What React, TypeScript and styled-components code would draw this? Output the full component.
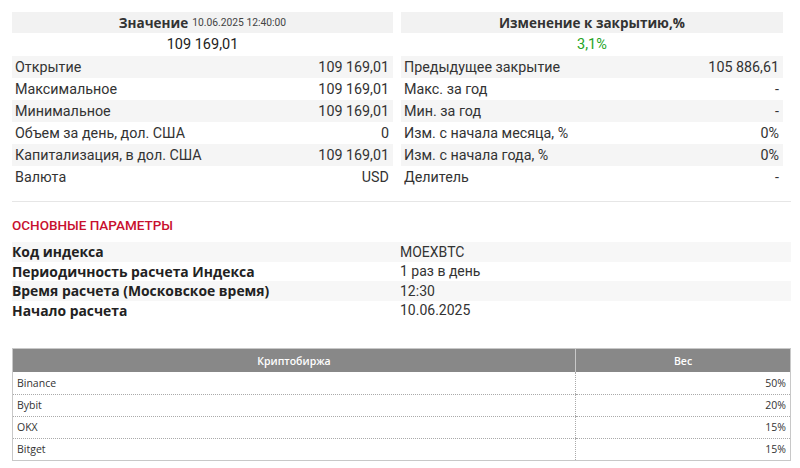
import styled, { createGlobalStyle } from "styled-components";

const GlobalStyle = createGlobalStyle`
  html, body {
    margin: 0;
    padding: 0;
    background: #fff;
  }
  body {
    font-family: Roboto, "Noto Sans", sans-serif;
    color: #333;
  }
`;

const leftRows = [
  ["Открытие", "109 169,01"],
  ["Максимальное", "109 169,01"],
  ["Минимальное", "109 169,01"],
  ["Объем за день, дол. США", "0"],
  ["Капитализация, в дол. США", "109 169,01"],
  ["Валюта", "USD"],
];

const rightRows = [
  ["Предыдущее закрытие", "105 886,61"],
  ["Макс. за год", "-"],
  ["Мин. за год", "-"],
  ["Изм. с начала месяца, %", "0%"],
  ["Изм. с начала года, %", "0%"],
  ["Делитель", "-"],
];

const params = [
  ["Код индекса", "MOEXBTC"],
  ["Периодичность расчета Индекса", "1 раз в день"],
  ["Время расчета (Московское время)", "12:30"],
  ["Начало расчета", "10.06.2025"],
];

const exchanges = [
  ["Binance", "50%"],
  ["Bybit", "20%"],
  ["OKX", "15%"],
  ["Bitget", "15%"],
];

const App = () => {
  return (
    <Page>
      <GlobalStyle />
      <Panels>
        <Panel>
          <PanelHead>
            Значение <small>10.06.2025 12:40:00</small>
          </PanelHead>
          <BigValue>109 169,01</BigValue>
          {leftRows.map(([k, v], i) => (
            <Row key={k} $striped={i % 2 === 0}>
              <span>{k}</span>
              <span>{v}</span>
            </Row>
          ))}
        </Panel>
        <Panel>
          <PanelHead>Изменение к закрытию,%</PanelHead>
          <BigValue $green>3,1%</BigValue>
          {rightRows.map(([k, v], i) => (
            <Row key={k} $striped={i % 2 === 0}>
              <span>{k}</span>
              <span>{v}</span>
            </Row>
          ))}
        </Panel>
      </Panels>

      <Divider />

      <SectionTitle>Основные параметры</SectionTitle>
      <Params>
        {params.map(([k, v], i) => (
          <ParamRow key={k} $striped={i % 2 === 0}>
            <ParamLabel>{k}</ParamLabel>
            <ParamValue>{v}</ParamValue>
          </ParamRow>
        ))}
      </Params>

      <Table>
        <thead>
          <tr>
            <Th>Криптобиржа</Th>
            <Th $narrow>Вес</Th>
          </tr>
        </thead>
        <tbody>
          {exchanges.map(([name, w]) => (
            <tr key={name}>
              <Td>{name}</Td>
              <Td $right>{w}</Td>
            </tr>
          ))}
        </tbody>
      </Table>
    </Page>
  );
};

const Page = styled.div`
  width: 800px;
  height: 468px;
  box-sizing: border-box;
  padding: 12px 9px 0 12px;
  overflow: hidden;
`;

const Panels = styled.div`
  display: grid;
  grid-template-columns: 381px 382px;
  column-gap: 8px;
`;

const Panel = styled.div`
  display: flex;
  flex-direction: column;
`;

const PanelHead = styled.div`
  height: 21px;
  background: #f2f2f2;
  display: flex;
  align-items: center;
  justify-content: center;
  gap: 4px;
  font-family: "Open Sans", "Noto Sans", sans-serif;
  font-size: 13.5px;
  font-weight: 700;
  color: #333;

  small {
    font-family: Roboto, "Noto Sans", sans-serif;
    font-size: 10.3px;
    font-weight: 400;
    color: #444;
  }
`;

const BigValue = styled.div<{ $green?: boolean }>`
  height: 23px;
  display: flex;
  align-items: center;
  justify-content: center;
  font-size: 14.5px;
  color: ${(p) => (p.$green ? "#24a324" : "#222")};
`;

const Row = styled.div<{ $striped?: boolean }>`
  height: 22px;
  display: flex;
  align-items: center;
  justify-content: space-between;
  padding: 0 4px 0 3px;
  font-size: 14.3px;
  color: #333;
  background: ${(p) => (p.$striped ? "#f5f5f5" : "#fff")};
`;

const Divider = styled.div`
  height: 1px;
  background: #e6e6e6;
  margin: 13px 0 0;
`;

const SectionTitle = styled.div`
  margin-top: 16px;
  font-size: 13.5px;
  font-weight: 500;
  text-transform: uppercase;
  color: #c8102e;
  line-height: 15px;
`;

const Params = styled.div`
  margin-top: 9px;
  display: flex;
  flex-direction: column;
`;

const ParamRow = styled.div<{ $striped?: boolean }>`
  height: 19.5px;
  display: grid;
  grid-template-columns: 388px 1fr;
  align-items: center;
  font-size: 14px;
  background: ${(p) => (p.$striped ? "#f7f7f7" : "#fff")};
`;

const ParamLabel = styled.span`
  font-family: "Open Sans", "Noto Sans", sans-serif;
  font-size: 13.9px;
  font-weight: 700;
  color: #222;
`;

const ParamValue = styled.span`
  color: #333;
`;

const Table = styled.table`
  margin-top: 28px;
  width: 779px;
  border-collapse: collapse;
  border: 1px solid #c8c8c8;
  font-family: "Open Sans", "Noto Sans", sans-serif;
  font-size: 10.5px;
  color: #333;
`;

const Th = styled.th<{ $narrow?: boolean }>`
  height: 23px;
  padding: 0;
  background: #888;
  color: #fff;
  font-weight: 600;
  text-align: center;
  width: ${(p) => (p.$narrow ? "214px" : "auto")};
  border-left: ${(p) => (p.$narrow ? "1px solid #c8c8c8" : "none")};
`;

const Td = styled.td<{ $right?: boolean }>`
  height: 22px;
  padding: 0 4px;
  box-sizing: border-box;
  text-align: ${(p) => (p.$right ? "right" : "left")};
  border-bottom: 1px dotted #aaa;
  border-left: ${(p) => (p.$right ? "1px dotted #aaa" : "none")};

  tr:last-child > & {
    border-bottom: none;
  }
`;

export default App;
